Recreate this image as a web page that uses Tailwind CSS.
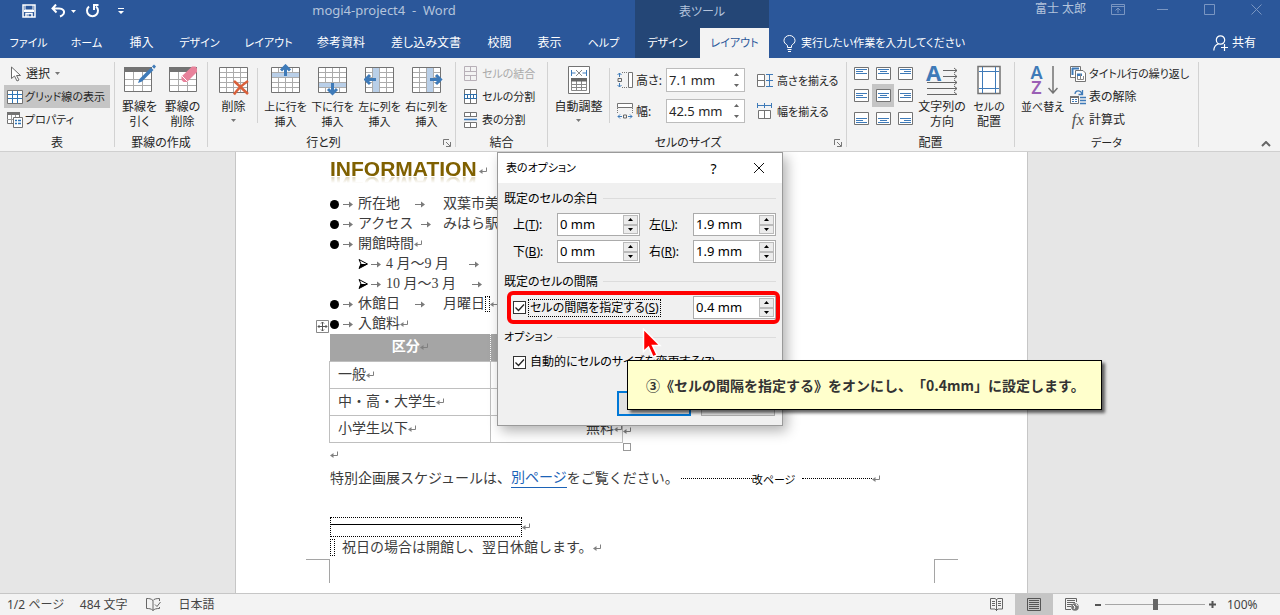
<!DOCTYPE html>
<html lang="ja">
<head>
<meta charset="utf-8">
<title>mogi4-project4 - Word</title>
<script src="https://cdn.jsdelivr.net/npm/@tailwindcss/browser@4"></script>
</head>
<body class="flex h-screen flex-col overflow-hidden whitespace-nowrap bg-[#e6e6e6] font-['Noto_Sans','Noto_Sans_CJK_JP',sans-serif] text-[12px] text-[#262626] [font-feature-settings:'palt']">

<svg width="0" height="0" class="absolute" aria-hidden="true">
  <symbol id="ret" viewBox="0 0 8 8"><path d="M7.500 0.500V4.500H2" fill="none" stroke="#808080"/><path d="M0 4.500L3.500 2V7Z" fill="#808080"/></symbol>
  <symbol id="tab" viewBox="0 0 10 7"><path d="M0 3.500H7" stroke="#7a7a7a" fill="none"/><path d="M6 0.500L10 3.500L6 6.500Z" fill="#7a7a7a"/></symbol>
  <symbol id="up" viewBox="0 0 5 3"><path d="M2.500 0L5 3H0Z" fill="currentColor"/></symbol>
  <symbol id="down" viewBox="0 0 5 3"><path d="M0 0H5L2.500 3Z" fill="currentColor"/></symbol>
  <symbol id="check" viewBox="0 0 13 13"><path d="M2.500 6.500L5.500 9.500L11 3.500" fill="none" stroke="#222" stroke-width="1.300"/></symbol>
  <symbol id="launch" viewBox="0 0 8 8"><path d="M0.500 6V0.500H6M3 3L7 7M7.500 3V7.500H3" fill="none" stroke="#777"/></symbol>
  <symbol id="grid" viewBox="0 0 30 28"><path d="M0.500 0.500H28.500V25.500H0.500Z" fill="#fff"/><path d="M7.500 0.500V25.500M14.500 0.500V25.500M21.500 0.500V25.500M0.500 5.500H28.500M0.500 10.500H28.500M0.500 15.500H28.500M0.500 20.500H28.500" stroke="#ababab" fill="none"/><path d="M0.500 0.500H28.500V25.500H0.500Z" fill="none" stroke="#737373"/></symbol>
  <symbol id="head" viewBox="0 0 30 28"><path d="M0.500 0.500H27.500V24.500H0.500Z" fill="#fff"/><path d="M9.500 5V24M18.500 5V24M0 12.500H28M0 18.500H28" stroke="#ababab" fill="none"/><path d="M0.500 0.500H27.500V24.500H0.500Z" fill="none" stroke="#737373"/><path d="M0 0H28V5H0Z" fill="#737373"/></symbol>
</svg>

<header class="shrink-0 bg-[#2b579a] text-white">
  <div class="flex h-7 items-stretch text-[#b4c4dc]">
    <div class="flex w-[635px] items-center">
      <div class="flex w-[134px] items-center pb-[6px] pl-[22px] text-white">
        <button aria-label="保存"><svg class="h-[14px] w-[14px]" viewBox="0 0 14 14" fill="none" stroke="currentColor"><path d="M1 1H13V13H1Z" stroke-width="1.500"/><path d="M3 1V6H11V1" /><path d="M2 7H12" stroke-width="2"/><path d="M4 13V9.500H10V13" stroke-width="1.500"/><path d="M6 10V13"/></svg></button>
        <button aria-label="元に戻す" class="ml-[15px] flex items-center gap-[6px]"><svg class="h-[14px] w-[14px]" viewBox="0 0 14 14" fill="none" stroke="currentColor" stroke-width="2"><path d="M5 0.500L1.500 4.500L5.500 8.500M2 4.500H8C12 4.500 14 7 12.500 10C11.500 11.500 10.500 12 9 12.500"/></svg><svg class="h-[3px] w-[5px]"><use href="#down"/></svg></button>
        <button aria-label="繰り返し" class="ml-[9px]"><svg class="h-[14px] w-[15px]" viewBox="0 0 15 14" fill="none" stroke="currentColor" stroke-width="2"><path d="M4 2.500A5.500 5.500 0 1 0 11 2.500"/><path d="M13.500 1H9V6"/></svg></button>
        <button aria-label="カスタマイズ" class="ml-[18px]"><svg class="h-[6px] w-[6px]" viewBox="0 0 6 6"><path d="M0 0H6V1H0ZM0 3H6L3 6Z" fill="currentColor"/></svg></button>
      </div>
      <div class="w-[500px] pb-[8px] text-center"><span class="whitespace-pre text-[13px] leading-5">mogi4-project4  -  Word</span></div>
    </div>
    <div class="flex w-[134px] items-center justify-center bg-[#244676] pb-1">表ツール</div>
    <div class="flex flex-1 items-center justify-end pb-[10px] pr-[18px]">
      <span class="mr-[25px] text-[12px]">富士 太郎</span>
      <div class="flex items-center gap-[32px] text-[#7a96c2]">
        <button aria-label="リボンの表示オプション"><svg class="h-[11px] w-[14px]" viewBox="0 0 14 11" fill="none" stroke="currentColor"><path d="M0.500 0.500H13.500V10.500H0.500ZM0.500 2.500H13.500M7 9V4.500M4.500 6.500L7 4L9.500 6.500"/></svg></button>
        <button aria-label="最小化"><svg class="h-[11px] w-[11px]" viewBox="0 0 11 11"><path d="M0 5.500H11" stroke="currentColor"/></svg></button>
        <button aria-label="最大化" class="ml-[4px]"><svg class="h-[11px] w-[11px]" viewBox="0 0 11 11"><path d="M0.500 0.500H10.500V10.500H0.500Z" fill="none" stroke="currentColor"/></svg></button>
        <button aria-label="閉じる" class="ml-[4px]"><svg class="h-[11px] w-[11px]" viewBox="0 0 11 11"><path d="M0.500 0.500L10.500 10.500M10.500 0.500L0.500 10.500" stroke="currentColor"/></svg></button>
      </div>
    </div>
  </div>
  <nav class="flex h-[30px] items-stretch">
    <button class="w-[57px] text-[11px]">ファイル</button>
    <button class="w-[59px] text-[11px]">ホーム</button>
    <button class="w-[51px]">挿入</button>
    <button class="w-[65px] text-[11px]">デザイン</button>
    <button class="w-[73px] text-[11px]">レイアウト</button>
    <button class="w-[72px]">参考資料</button>
    <button class="w-[98px]">差し込み文書</button>
    <button class="w-[49px]">校閲</button>
    <button class="w-[51px]">表示</button>
    <button class="mr-[3px] w-[57px] text-[11px]">ヘルプ</button>
    <button class="w-[65px] bg-[#244676] text-[11px]">デザイン</button>
    <button class="w-[69px] bg-[#f3f3f3] text-[11px] text-[#2b579a]">レイアウト</button>
    <button class="ml-[14px] flex items-center gap-[5px] text-[11px]"><svg class="h-[17px] w-[13px]" viewBox="0 0 13 17" fill="none" stroke="currentColor"><path d="M4.500 12.500V10.500C2 8.500 1 7.500 1 5.500A5.500 5 0 0 1 12 5.500C12 7.500 11 8.500 8.500 10.500V12.500ZM4.500 14.500H8.500M5 16.500H8"/></svg>実行したい作業を入力してください</button>
    <button class="ml-auto mr-6 flex items-center gap-1"><svg class="h-4 w-[15px]" viewBox="0 0 15 16" fill="none" stroke="currentColor" stroke-width="1.200"><circle cx="7.500" cy="5" r="4.200"/><path d="M0.800 15.500C1 12 3 9.500 5.500 9M8 12.500H15M11.500 9V16"/></svg>共有</button>
  </nav>
</header>

<section class="flex h-[94px] shrink-0 border-b border-[#cfcfcf] bg-[#f3f3f3] pt-1 leading-[15px]">
  <div class="h-[85px] w-[115px] border-r border-[#d2d2d2]">
    <div class="flex h-[72px] flex-col px-1">
      <button class="flex h-[23px] items-center pl-[6px]"><svg class="h-4 w-[16px]" viewBox="0 0 16 16"><path d="M1.500 1V12.500L4.500 10L7 15L9 14L6.500 9.500H10.500Z" fill="#fff" stroke="#6a6a6a"/></svg>選択<svg class="ml-[5px] h-[3px] w-[5px] text-[#777]"><use href="#down"/></svg></button>
      <button class="flex h-[23px] items-center gap-[2px] bg-[#c5c5c5] pl-[3px] text-[11px]"><svg class="h-[14px] w-4 shrink-0" viewBox="0 0 16 14" fill="none"><path d="M0.500 0.500H15.500V13.500H0.500Z" fill="#fff" stroke="#737373"/><path d="M1 4.500H15M1 8.500H15M5.500 1V13M10.500 1V13" stroke="#2e75b6"/></svg>グリッド線の表示</button>
      <button class="flex h-[23px] items-center gap-[2px] pl-[3px] text-[11px]"><svg class="h-4 w-4" viewBox="0 0 16 16" fill="none"><path d="M0.500 0.500H12.500V11.500H0.500Z" fill="#fff" stroke="#737373"/><path d="M0 0H13V3H0Z" fill="#737373"/><path d="M4.500 3V11M8.500 3V11M0 7.500H8" stroke="#999"/><path d="M6.500 5.500H15.500V15.500H6.500Z" fill="#fff" stroke="#737373"/><path d="M8 8.500H10M11 8.500H14M8 11.500H10M11 11.500H14" stroke="#2e75b6" stroke-width="1.500"/></svg>プロパティ</button>
    </div>
    <div class="pt-px text-center">表</div>
  </div>

  <div class="h-[85px] w-[93px] border-r border-[#d2d2d2]">
    <div class="flex h-[72px] items-start pl-[3px]">
      <button class="flex w-[43px] flex-col items-center pt-[2px]"><svg class="mb-[3px] h-8 w-8" viewBox="0 0 32 32"><use href="#head" y="3" width="30" height="28"/><path d="M14 19L15.500 15L27 3.500L29.500 6L18 17.500Z" fill="#3e7ab8"/><path d="M28 2.500L30 0.500L32 2.500L30.200 4.800Z" fill="#3e7ab8"/></svg>罫線を<br>引く</button>
      <button class="flex w-[43px] flex-col items-center pt-[2px]"><svg class="mb-[3px] h-8 w-8" viewBox="0 0 32 32"><use href="#head" x="2" y="3" width="30" height="28"/><path d="M14.500 12.500L25 2.500H28.500L30 4.500V8L20 18H16.500L14.500 16Z" fill="#e8829b"/><path d="M15 12L20.500 17.500" stroke="#fff"/></svg>罫線の<br>削除</button>
    </div>
    <div class="pt-px text-center">罫線の作成</div>
  </div>

  <div class="relative h-[85px] w-[248px] border-r border-[#d2d2d2]">
    <div class="flex h-[72px] items-start pl-[2px]">
      <button class="flex w-[47px] flex-col items-center pt-[2px]"><svg class="mb-[3px] h-8 w-8" viewBox="0 0 32 32"><use href="#grid" x="1" y="3" width="30" height="28"/><path d="M16 17L30 30M30 17C24 21 19 26 16 30.500" fill="none" stroke="#d9603b" stroke-width="2.500"/></svg>削除<svg class="mt-[5px] h-[3px] w-[5px] text-[#777]"><use href="#down"/></svg></button>
      <div class="mr-1 mt-[6px] h-[55px] w-px bg-[#d2d2d2]"></div>
      <button class="flex w-[47px] flex-col items-center pt-[2px] text-[11px]"><svg class="mb-[3px] h-8 w-8" viewBox="0 0 32 32"><use href="#grid" x="1" y="3" width="30" height="28"/><path d="M2 9H29V13H2Z" fill="#b9cfe8"/><path d="M15.500 12V3M11 6.500L15.500 2L20 6.500" stroke="#3e7ab8" stroke-width="3" fill="none"/></svg>上に行を<br>挿入</button>
      <button class="flex w-[47px] flex-col items-center pt-[2px] text-[11px]"><svg class="mb-[3px] h-8 w-8" viewBox="0 0 32 32"><use href="#grid" x="1" y="3" width="30" height="28"/><path d="M2 19H29V23H2Z" fill="#b9cfe8"/><path d="M15.500 19V29M11 25L15.500 29.500L20 25" stroke="#3e7ab8" stroke-width="3" fill="none"/></svg>下に行を<br>挿入</button>
      <button class="flex w-[47px] flex-col items-center pt-[2px] text-[11px]"><svg class="mb-[3px] h-8 w-8" viewBox="0 0 32 32"><use href="#grid" x="1" y="3" width="30" height="28"/><path d="M9 4H15V28H9Z" fill="#b9cfe8"/><path d="M12 15.500H2M6 11L1.500 15.500L6 20" stroke="#3e7ab8" stroke-width="3" fill="none"/></svg>左に列を<br>挿入</button>
      <button class="flex w-[47px] flex-col items-center pt-[2px] text-[11px]"><svg class="mb-[3px] h-8 w-8" viewBox="0 0 32 32"><use href="#grid" x="1" y="3" width="30" height="28"/><path d="M16 4H22V28H16Z" fill="#b9cfe8"/><path d="M19 15.500H29M25 11L29.500 15.500L25 20" stroke="#3e7ab8" stroke-width="3" fill="none"/></svg>右に列を<br>挿入</button>
    </div>
    <div class="pr-4 pt-px text-center">行と列</div>
    <button aria-label="行と列の詳細" class="absolute bottom-0 right-1"><svg class="h-2 w-2"><use href="#launch"/></svg></button>
  </div>

  <div class="h-[85px] w-[92px] border-r border-[#d2d2d2]">
    <div class="flex h-[72px] flex-col pl-2 text-[11px]">
      <button class="flex h-[23px] items-center gap-1 text-[#aaa]" disabled><svg class="h-4 w-[14px]" viewBox="0 0 14 16" fill="none" stroke="#b8b0b8"><path d="M0.500 0.500H12.500V14.500H0.500ZM0.500 5.500H12.500M0.500 9.500H12.500M6.500 0.500V5.500M6.500 9.500V14.500"/></svg>セルの結合</button>
      <button class="flex h-[23px] items-center gap-1"><svg class="h-4 w-[14px]" viewBox="0 0 14 16" fill="none" stroke="#737373"><path d="M0.500 0.500H12.500V14.500H0.500ZM6.500 0.500V5.500M6.500 9.500V14.500" fill="#fff"/><path d="M0 5.500H13M0 9.500H13M3.500 5V10M6.500 5V10M9.500 5V10M0.500 5V10M12.500 5V10" stroke="#2e6da8"/></svg>セルの分割</button>
      <button class="flex h-[23px] items-center gap-1"><svg class="h-4 w-[14px]" viewBox="0 0 14 16" fill="none" stroke="#737373"><path d="M0.500 5V0.500H12.500V5M6.500 0V5M0.500 4.500H12.500M0.500 10.500H12.500V15.500H0.500ZM6.500 10V15" fill="#fff"/><path d="M0 7.500H13" stroke="#3e7ab8" stroke-width="1.500"/></svg>表の分割</button>
    </div>
    <div class="pt-px text-center">結合</div>
  </div>

  <div class="relative h-[85px] w-[299px] border-r border-[#d2d2d2]">
    <div class="flex h-[72px] items-start">
      <button class="flex w-[61px] flex-col items-center pt-[2px]"><svg class="mb-[3px] h-8 w-6" viewBox="0 0 24 32" fill="none"><path d="M1.500 2.500H22.500V29.500H1.500Z" fill="#fff" stroke="#737373"/><path d="M4.500 6V12M19.500 6V12M5 9H8.500M15.500 9H19" stroke="#3e7ab8"/><path d="M9 6L15 12M15 6L9 12" stroke="#888"/><path d="M4.500 15.500H19.500V26.500H4.500ZM9.500 16V26M14.500 16V26M4 20.500H20M4 23.500H20" stroke="#888"/><path d="M4 14H20V17.500H4Z" fill="#666"/></svg>自動調整<svg class="mt-[5px] h-[3px] w-[5px] text-[#777]"><use href="#down"/></svg></button>
      <div class="mt-[6px] h-[55px] w-px bg-[#d2d2d2]"></div>
      <div class="flex flex-col gap-[7px] pl-[7px] pt-[6px]">
        <div class="flex h-6 items-center">
          <svg class="mr-[3px] h-4 w-4" viewBox="0 0 16 16" fill="none"><path d="M2.500 1V5M0.500 3L2.500 1L4.500 3M2.500 11V15M0.500 13L2.500 15L4.500 13" stroke="#3e7ab8"/><path d="M1 6.500H4.500V9.500H1Z" stroke="#666"/><path d="M5 0.500H11M5 15.500H11" stroke="#777" stroke-dasharray="1 1"/><path d="M11.500 0.500H15.500V15.500H11.500Z" fill="#fff" stroke="#737373"/></svg>
          <label for="rh" class="w-[30px]">高さ:</label>
          <div class="flex h-6 w-[79px] items-center border border-[#bcbcbc] bg-white text-[13px]"><input id="rh" value="7.1 mm" class="min-w-0 flex-1 pl-[2px] outline-none"><span class="flex flex-col gap-[8px] px-[5px] text-[#666]"><button aria-label="増" class="h-[3px]"><svg class="block h-[3px] w-[5px]"><use href="#up"/></svg></button><button aria-label="減" class="h-[3px]"><svg class="block h-[3px] w-[5px]"><use href="#down"/></svg></button></span></div>
          <button class="ml-3 flex items-center gap-1 text-[11px]"><svg class="h-[15px] w-4" viewBox="0 0 16 15" fill="none"><path d="M0.500 1.500H7.500V13.500H0.500ZM0.500 7.500H7.500" fill="#fff" stroke="#737373"/><path d="M9 1.500H16M9 7.500H16M9 13.500H16M12.500 2V13" stroke="#3e7ab8"/></svg>高さを揃える</button>
        </div>
        <div class="flex h-6 items-center">
          <svg class="mr-[3px] h-4 w-4" viewBox="0 0 16 16" fill="none"><path d="M0.500 0.500H15.500V4.500H0.500Z" fill="#fff" stroke="#737373"/><path d="M0.500 5V11M15.500 5V11" stroke="#777" stroke-dasharray="1 1"/><path d="M1 13.500H5M3 11.500L1 13.500L3 15.500M11 13.500H15M13 11.500L15 13.500L13 15.500" stroke="#3e7ab8"/><path d="M6.500 12H9.500V15H6.500Z" stroke="#666"/></svg>
          <label for="rw" class="w-[30px]">幅:</label>
          <div class="flex h-6 w-[79px] items-center border border-[#bcbcbc] bg-white text-[13px]"><input id="rw" value="42.5 mm" class="min-w-0 flex-1 pl-[2px] outline-none"><span class="flex flex-col gap-[8px] px-[5px] text-[#666]"><button aria-label="増" class="h-[3px]"><svg class="block h-[3px] w-[5px]"><use href="#up"/></svg></button><button aria-label="減" class="h-[3px]"><svg class="block h-[3px] w-[5px]"><use href="#down"/></svg></button></span></div>
          <button class="ml-3 flex items-center gap-1 text-[11px]"><svg class="h-4 w-4" viewBox="0 0 16 16" fill="none"><path d="M0.500 0V5M7.500 0V5M14.500 0V5M0 2.500H15" stroke="#3e7ab8"/><path d="M1.500 7.500H13.500V15.500H1.500ZM7.500 7.500V15.500" fill="#fff" stroke="#737373"/></svg>幅を揃える</button>
        </div>
      </div>
    </div>
    <div class="pr-[18px] pt-px text-center">セルのサイズ</div>
    <button aria-label="セルのサイズの詳細" class="absolute bottom-0 right-1"><svg class="h-2 w-2"><use href="#launch"/></svg></button>
  </div>

  <div class="h-[85px] w-[168px] border-r border-[#d2d2d2]">
    <div class="flex h-[72px] items-start pl-[3px]">
      <div class="grid w-[66px] shrink-0 grid-cols-3">
        <button aria-label="上揃え(左)" class="flex h-[22px] items-center justify-center"><svg class="h-[13px] w-[15px]" viewBox="0 0 15 13"><path d="M0.500 0.500H14.500V12.500H0.500Z" fill="#fff" stroke="#737373"/><path d="M2 2.500H13M2 4.500H9M2 6.500H13" stroke="#3e7ab8"/></svg></button>
        <button aria-label="上揃え(中央)" class="flex h-[22px] items-center justify-center"><svg class="h-[13px] w-[15px]" viewBox="0 0 15 13"><path d="M0.500 0.500H14.500V12.500H0.500Z" fill="#fff" stroke="#737373"/><path d="M2 2.500H13M4 4.500H11M2 6.500H13" stroke="#3e7ab8"/></svg></button>
        <button aria-label="上揃え(右)" class="flex h-[22px] items-center justify-center"><svg class="h-[13px] w-[15px]" viewBox="0 0 15 13"><path d="M0.500 0.500H14.500V12.500H0.500Z" fill="#fff" stroke="#737373"/><path d="M2 2.500H13M6 4.500H13M2 6.500H13" stroke="#3e7ab8"/></svg></button>
        <button aria-label="中央揃え(左)" class="flex h-[23px] items-center justify-center"><svg class="h-[13px] w-[15px]" viewBox="0 0 15 13"><path d="M0.500 0.500H14.500V12.500H0.500Z" fill="#fff" stroke="#737373"/><path d="M2 4.500H13M2 6.500H9M2 8.500H13" stroke="#3e7ab8"/></svg></button>
        <button aria-label="中央揃え" class="flex h-[23px] items-center justify-center bg-[#c5c5c5]"><svg class="h-[13px] w-[15px]" viewBox="0 0 15 13"><path d="M0.500 0.500H14.500V12.500H0.500Z" fill="#fff" stroke="#737373"/><path d="M2 4.500H13M4 6.500H11M2 8.500H13" stroke="#3e7ab8"/></svg></button>
        <button aria-label="中央揃え(右)" class="flex h-[23px] items-center justify-center"><svg class="h-[13px] w-[15px]" viewBox="0 0 15 13"><path d="M0.500 0.500H14.500V12.500H0.500Z" fill="#fff" stroke="#737373"/><path d="M2 4.500H13M6 6.500H13M2 8.500H13" stroke="#3e7ab8"/></svg></button>
        <button aria-label="下揃え(左)" class="flex h-[23px] items-center justify-center"><svg class="h-[13px] w-[15px]" viewBox="0 0 15 13"><path d="M0.500 0.500H14.500V12.500H0.500Z" fill="#fff" stroke="#737373"/><path d="M2 6.500H13M2 8.500H9M2 10.500H13" stroke="#3e7ab8"/></svg></button>
        <button aria-label="下揃え(中央)" class="flex h-[23px] items-center justify-center"><svg class="h-[13px] w-[15px]" viewBox="0 0 15 13"><path d="M0.500 0.500H14.500V12.500H0.500Z" fill="#fff" stroke="#737373"/><path d="M2 6.500H13M4 8.500H11M2 10.500H13" stroke="#3e7ab8"/></svg></button>
        <button aria-label="下揃え(右)" class="flex h-[23px] items-center justify-center"><svg class="h-[13px] w-[15px]" viewBox="0 0 15 13"><path d="M0.500 0.500H14.500V12.500H0.500Z" fill="#fff" stroke="#737373"/><path d="M2 6.500H13M6 8.500H13M2 10.500H13" stroke="#3e7ab8"/></svg></button>
      </div>
      <button class="ml-px flex w-[50px] shrink-0 flex-col items-center pt-[2px]"><span class="relative mb-[3px] block h-8 w-8"><svg class="h-8 w-8" viewBox="0 0 32 32" fill="none" stroke="#666"><path d="M17 6.500H31M28 4L31 6.500L28 9M17 12.500H31M28 10L31 12.500L28 15M1 18.500H31M28 16L31 18.500L28 21M1 24.500H31M28 22L31 24.500L28 27M1 30.500H31M28 28L31 30.500"/></svg><b class="absolute left-0 top-0 text-[22px] leading-[17px] text-[#3e7ab8]">A</b></span>文字列の<br>方向</button>
      <button class="flex w-[44px] flex-col items-center pt-[2px]"><svg class="mb-[3px] h-8 w-6" viewBox="0 0 24 32" fill="none"><path d="M1 2.500H23V29.500H1Z" fill="#fff" stroke="#737373" stroke-width="1.500"/><path d="M5.500 3V29M18.500 3V29M2 7.500H22M2 24.500H22" stroke="#3e7ab8"/></svg><span class="text-[11px]">セルの</span>配置</button>
    </div>
    <div class="pt-px text-center">配置</div>
  </div>

  <div class="h-[85px] w-[184px] border-r border-[#d2d2d2]">
    <div class="flex h-[72px] items-start">
      <button class="flex w-[55px] flex-col items-center pt-[2px]"><span class="mb-[3px] flex h-8 w-6 items-center"><span class="flex flex-col text-[18px] leading-[15px]"><b class="font-semibold text-[#3e7ab8]">A</b><b class="font-semibold text-[#9a5fb5]">Z</b></span><svg class="ml-[5px] h-7 w-[10px] shrink-0" viewBox="0 0 10 28" fill="none" stroke="#737373" stroke-width="1.500"><path d="M5 0V27M0.500 22L5 27L9.500 22"/></svg></span><span class="text-[11px]">並べ替え</span></button>
      <div class="flex flex-col items-start text-[11px]">
        <button class="flex h-[23px] items-center gap-[3px]"><svg class="h-4 w-4" viewBox="0 0 16 16" fill="none"><path d="M0.500 0.500H10.500V11.500H0.500Z" fill="#fff" stroke="#737373"/><path d="M2 2.500H9M2.500 2V9" stroke="#3e7ab8" stroke-width="2"/><path d="M5.500 4.500H13L15.500 7V15.500H5.500Z" fill="#fff" stroke="#737373"/><path d="M7 7.500H12V10H7Z" fill="#3e7ab8"/><path d="M7.500 10V13.500H13.500V10M10.500 8V13" stroke="#888"/></svg>タイトル行の繰り返し</button>
        <button class="flex h-[23px] items-center gap-[3px] text-[12px]"><svg class="h-4 w-4" viewBox="0 0 16 16" fill="none"><path d="M0.500 7.500H8.500V14.500H0.500Z" fill="#fff" stroke="#737373"/><path d="M0 8H9" stroke="#737373" stroke-width="2"/><path d="M2 10.500H7M2 12.500H7" stroke="#3e7ab8" stroke-dasharray="2 1"/><path d="M5 5C5 2 8 1 10.500 2.500L12 5M12.500 1V5.500H8.500M10 8.500H16M10 11.500H16M10 14.500H16" stroke="#3e7ab8" stroke-width="1.300"/></svg>表の解除</button>
        <button class="flex h-[23px] items-center gap-[3px] text-[12px]"><i class="w-4 font-['Liberation_Serif',serif] text-[17px] text-[#555]">fx</i>計算式</button>
      </div>
    </div>
    <div class="pt-px text-center text-[11px]">データ</div>
  </div>
  <div class="flex flex-1 items-end justify-end pb-[4px] pr-[9px]"><button aria-label="リボンを折りたたむ"><svg class="h-[6px] w-[10px]" viewBox="0 0 10 6"><path d="M1 5L5 1L9 5" fill="none" stroke="#666" stroke-width="2"/></svg></button></div>
</section>

<main class="relative flex min-h-0 flex-1 justify-center overflow-hidden pr-[17px]">
  <article class="w-[793px] shrink-0 border-x border-[#c6c6c6] bg-white pl-[70px] pr-[69px] font-['Liberation_Serif','Noto_Sans_CJK_JP',serif] text-[14px] leading-5 text-[#3c3c3c] [font-feature-settings:normal]">
    <div class="pl-6">
      <h1 class="flex h-[42px] items-center pb-[8px] font-['Liberation_Sans',sans-serif] text-[21px] font-bold text-[#7f6000]"><span class="leading-5 [-webkit-box-reflect:below_-5px_linear-gradient(transparent_55%,rgba(0,0,0,0.4))]">INFORMATION</span><svg class="ml-[2px] mt-1 h-2 w-2"><use href="#ret"/></svg></h1>
      <ul>
        <li class="flex h-5 items-center"><span class="h-[9px] w-[9px] rounded-full bg-black"></span><svg class="ml-1 mr-[5px] h-[7px] w-[10px]"><use href="#tab"/></svg><span class="flex w-[85px] items-center">所在地<svg class="ml-[15px] h-[7px] w-[10px]"><use href="#tab"/></svg></span>双葉市美</li>
        <li class="flex h-5 items-center"><span class="h-[9px] w-[9px] rounded-full bg-black"></span><svg class="ml-1 mr-[5px] h-[7px] w-[10px]"><use href="#tab"/></svg><span class="flex w-[85px] items-center">アクセス<svg class="ml-[8px] h-[7px] w-[10px]"><use href="#tab"/></svg></span>みはら駅</li>
        <li class="flex h-5 items-center"><span class="h-[9px] w-[9px] rounded-full bg-black"></span><svg class="ml-1 mr-[5px] h-[7px] w-[10px]"><use href="#tab"/></svg>開館時間<svg class="h-2 w-2"><use href="#ret"/></svg></li>
        <li class="flex h-5 items-center pl-7"><svg class="h-[10px] w-[10px]" viewBox="0 0 10 10"><path d="M1 0.500L9.500 5L1 9.500L3 5Z" fill="#fff" stroke="#000"/><path d="M2.500 5H9.500L1 9.500Z" fill="#000"/></svg><svg class="ml-[3px] mr-[5px] h-[7px] w-[10px]"><use href="#tab"/></svg>4 月～9 月<svg class="ml-[20px] h-[7px] w-[10px]"><use href="#tab"/></svg></li>
        <li class="flex h-5 items-center pl-7"><svg class="h-[10px] w-[10px]" viewBox="0 0 10 10"><path d="M1 0.500L9.500 5L1 9.500L3 5Z" fill="#fff" stroke="#000"/><path d="M2.500 5H9.500L1 9.500Z" fill="#000"/></svg><svg class="ml-[3px] mr-[5px] h-[7px] w-[10px]"><use href="#tab"/></svg>10 月～3 月<svg class="ml-[16px] h-[7px] w-[10px]"><use href="#tab"/></svg></li>
        <li class="flex h-5 items-center"><span class="h-[9px] w-[9px] rounded-full bg-black"></span><svg class="ml-1 mr-[5px] h-[7px] w-[10px]"><use href="#tab"/></svg><span class="flex w-[85px] items-center">休館日<svg class="ml-[15px] h-[7px] w-[10px]"><use href="#tab"/></svg></span>月曜日<span class="h-4 w-[5px] border border-dotted border-black"></span><svg class="h-2 w-2"><use href="#ret"/></svg></li>
        <li class="relative flex h-5 items-center"><svg class="absolute -left-[14px] top-[6px] h-[13px] w-[13px]" viewBox="0 0 13 13" fill="none" stroke="#555"><path d="M0.500 0.500H12.500V12.500H0.500Z" stroke="#888"/><path d="M6.500 2V11M2 6.500H11M5 3.500L6.500 2L8 3.500M5 9.500L6.500 11L8 9.500M3.500 5L2 6.500L3.500 8M9.500 5L11 6.500L9.500 8"/></svg><span class="h-[9px] w-[9px] rounded-full bg-black"></span><svg class="ml-1 mr-[5px] h-[7px] w-[10px]"><use href="#tab"/></svg>入館料<svg class="h-2 w-2"><use href="#ret"/></svg></li>
      </ul>
      <div class="relative -ml-px w-[294px]">
        <table class="w-full table-fixed border-collapse">
          <tr class="h-[27px] bg-[#a5a5a5] text-white"><th class="w-[161px] border-r border-dotted border-white p-0"><span class="inline-flex items-center">区分<svg class="h-2 w-2"><use href="#ret"/></svg></span></th><th class="p-0"></th></tr>
          <tr class="h-[27px]"><td class="border border-[#bfbfbf] py-0 pl-2"><span class="flex items-center">一般<svg class="h-2 w-2"><use href="#ret"/></svg></span></td><td class="border border-[#bfbfbf]"></td></tr>
          <tr class="h-[27px]"><td class="border border-[#bfbfbf] py-0 pl-2"><span class="flex items-center">中・高・大学生<svg class="h-2 w-2"><use href="#ret"/></svg></span></td><td class="border border-[#bfbfbf]"></td></tr>
          <tr class="h-[27px]"><td class="border border-[#bfbfbf] py-0 pl-2"><span class="flex items-center">小学生以下<svg class="h-2 w-2"><use href="#ret"/></svg></span></td><td class="border border-[#bfbfbf] p-0"><span class="flex items-center justify-end">無料<svg class="h-2 w-2"><use href="#ret"/></svg></span></td></tr>
        </table>
        <svg class="absolute -right-2 bottom-2 h-2 w-2"><use href="#ret"/></svg>
        <span class="absolute -bottom-2 -right-2 h-2 w-2 border border-[#999]"></span>
      </div>
      <div class="flex h-6 items-center"><svg class="h-2 w-2"><use href="#ret"/></svg></div>
      <p class="flex h-6 items-center">特別企画展スケジュールは、<a href="#" class="border-b border-[#1c63b7] leading-[18px] text-[#1c63b7]">別ページ</a>をご覧ください。<span class="ml-[2px] w-[71px] border-b border-dotted border-black"></span><span class="font-['Noto_Sans_CJK_JP',sans-serif] text-[11px] text-black [font-feature-settings:'palt']">改ページ</span><span class="ml-[7px] w-[70px] border-b border-dotted border-black"></span><svg class="h-2 w-2"><use href="#ret"/></svg></p>
      <div class="mt-[26px] flex h-5 items-center"><span class="h-5 w-[192px] border border-dotted border-black pt-[6px]"><span class="block h-px bg-black"></span></span><svg class="h-2 w-2"><use href="#ret"/></svg></div>
      <p class="flex h-[22px] items-center"><span class="mr-[7px] h-[17px] w-[5px] border border-dotted border-black"></span>祝日の場合は開館し、翌日休館します。<svg class="h-2 w-2"><use href="#ret"/></svg></p>
    </div>
    <div class="flex justify-between"><span class="h-6 w-6 border-r border-t border-[#a5a5a5]"></span><span class="h-6 w-6 border-l border-t border-[#a5a5a5]"></span></div>
  </article>

  <div role="dialog" aria-label="表のオプション" class="absolute left-[497px] top-0 w-[286px] border border-[#9a9a9a] bg-[#f0f0f0] pb-[9px] text-black shadow-[4px_5px_12px_rgba(0,0,0,0.3)]">
    <div class="flex h-[30px] items-center bg-white pl-2"><span class="text-[11px]">表のオプション</span><button aria-label="ヘルプ" class="ml-auto w-[45px] text-[14px]">?</button><button aria-label="閉じる" class="flex w-[46px] justify-center"><svg class="h-[10px] w-[10px]" viewBox="0 0 10 10"><path d="M0 0L10 10M10 0L0 10" stroke="#111"/></svg></button></div>
    <div class="px-[6px]">
      <div class="flex h-[30px] items-center gap-[5px] pt-px text-[12px]">既定のセルの余白<span class="h-px flex-1 bg-[#dcdcdc]"></span></div>
      <div class="grid grid-cols-[53px_83px_9px_44px_83px] gap-y-[4px] text-[13px]">
        <label for="t" class="self-center pl-[9px] pt-px text-[12px]">上(<u>T</u>):</label>
        <div class="flex h-[23px] border border-[#ababab] bg-white p-px"><input id="t" value="0 mm" class="min-w-0 flex-1 pl-px outline-none"><span class="flex w-[15px] flex-col"><button aria-label="増" class="flex flex-1 items-center justify-center border border-[#bbb] bg-[#ececec]"><svg class="h-[3px] w-[5px]"><use href="#up"/></svg></button><button aria-label="減" class="flex flex-1 items-center justify-center border border-[#bbb] bg-[#ececec]"><svg class="h-[3px] w-[5px]"><use href="#down"/></svg></button></span></div>
        <span></span>
        <label for="l" class="self-center pt-px text-[12px]">左(<u>L</u>):</label>
        <div class="flex h-[23px] border border-[#ababab] bg-white p-px"><input id="l" value="1.9 mm" class="min-w-0 flex-1 pl-px outline-none"><span class="flex w-[15px] flex-col"><button aria-label="増" class="flex flex-1 items-center justify-center border border-[#bbb] bg-[#ececec]"><svg class="h-[3px] w-[5px]"><use href="#up"/></svg></button><button aria-label="減" class="flex flex-1 items-center justify-center border border-[#bbb] bg-[#ececec]"><svg class="h-[3px] w-[5px]"><use href="#down"/></svg></button></span></div>
        <label for="b" class="self-center pl-[9px] pt-px text-[12px]">下(<u>B</u>):</label>
        <div class="flex h-[23px] border border-[#ababab] bg-white p-px"><input id="b" value="0 mm" class="min-w-0 flex-1 pl-px outline-none"><span class="flex w-[15px] flex-col"><button aria-label="増" class="flex flex-1 items-center justify-center border border-[#bbb] bg-[#ececec]"><svg class="h-[3px] w-[5px]"><use href="#up"/></svg></button><button aria-label="減" class="flex flex-1 items-center justify-center border border-[#bbb] bg-[#ececec]"><svg class="h-[3px] w-[5px]"><use href="#down"/></svg></button></span></div>
        <span></span>
        <label for="r" class="self-center pt-px text-[12px]">右(<u>R</u>):</label>
        <div class="flex h-[23px] border border-[#ababab] bg-white p-px"><input id="r" value="1.9 mm" class="min-w-0 flex-1 pl-px outline-none"><span class="flex w-[15px] flex-col"><button aria-label="増" class="flex flex-1 items-center justify-center border border-[#bbb] bg-[#ececec]"><svg class="h-[3px] w-[5px]"><use href="#up"/></svg></button><button aria-label="減" class="flex flex-1 items-center justify-center border border-[#bbb] bg-[#ececec]"><svg class="h-[3px] w-[5px]"><use href="#down"/></svg></button></span></div>
      </div>
      <div class="mt-[3px] flex h-[30px] items-center gap-[5px] pt-px">既定のセルの間隔<span class="h-px flex-1 bg-[#dcdcdc]"></span></div>
      <div class="relative flex h-[23px] items-center pl-[9px]">
        <span class="relative h-[13px] w-[13px]"><input type="checkbox" id="s" checked class="peer block h-[13px] w-[13px] appearance-none border border-[#333] bg-white"><svg class="pointer-events-none absolute inset-0 hidden h-[13px] w-[13px] peer-checked:block"><use href="#check"/></svg></span>
        <label for="s" class="ml-[2px] border border-dotted border-black px-px leading-4">セルの間隔を指定する(<u>S</u>)</label>
        <div class="ml-auto flex h-[23px] w-[83px] border border-[#ababab] bg-white p-px text-[13px]"><input aria-label="間隔" value="0.4 mm" class="min-w-0 flex-1 pl-px outline-none"><span class="flex w-[15px] flex-col"><button aria-label="増" class="flex flex-1 items-center justify-center border border-[#bbb] bg-[#ececec]"><svg class="h-[3px] w-[5px]"><use href="#up"/></svg></button><button aria-label="減" class="flex flex-1 items-center justify-center border border-[#bbb] bg-[#ececec]"><svg class="h-[3px] w-[5px]"><use href="#down"/></svg></button></span></div>
        <span class="pointer-events-none absolute -inset-y-[5px] -right-1 left-[3px] rounded-md border-4 border-[#f00]"></span>
      </div>
      <div class="mt-[3px] flex h-[30px] items-center gap-[5px] pt-px"><span class="text-[11px]">オプション</span><span class="h-px flex-1 bg-[#dcdcdc]"></span></div>
      <div class="flex h-5 items-center pl-[9px]">
        <span class="relative h-[13px] w-[13px]"><input type="checkbox" id="z" checked class="peer block h-[13px] w-[13px] appearance-none border border-[#333] bg-white"><svg class="pointer-events-none absolute inset-0 hidden h-[13px] w-[13px] peer-checked:block"><use href="#check"/></svg></span>
        <label for="z" class="ml-[4px]">自動的にセルのサイズを変更する(<u>Z</u>)</label>
      </div>
      <div class="mt-[19px] flex justify-end gap-[10px] pr-px">
        <button aria-label="OK" class="h-[25px] w-[74px] border-2 border-[#0078d7] bg-[#e1e1e1]"></button>
        <button aria-label="キャンセル" class="h-[25px] w-[74px] border border-[#adadad] bg-[#e1e1e1]"></button>
      </div>
    </div>
  </div>

  <svg class="absolute left-[642px] top-[176px] h-[32px] w-[20px]" viewBox="0 0 20 32"><path d="M1.500 1V23.500L6.500 19L11 29L15 27L10.500 17.500H18Z" fill="#f00" stroke="#fff" stroke-width="1.500"/></svg>
  <div class="absolute left-[627px] top-[208px] flex h-[50px] w-[475px] items-center border border-black bg-[#ffffcc] pl-[18px] font-['Noto_Sans_CJK_JP',sans-serif] text-[14px] font-bold text-[#333] shadow-[3px_3px_3px_rgba(0,0,0,0.6)] [font-feature-settings:normal] [text-spacing-trim:space-all]">③《セルの間隔を指定する》をオンにし、「0.4mm」に設定します。</div>
</main>

<footer class="flex h-[22px] shrink-0 items-stretch border-t border-[#c6c6c6] bg-[#f3f3f3] text-[#444]">
  <div class="flex items-center gap-4 pl-[7px]"><span>1/2 ページ</span><span>484 文字</span><svg class="mx-[2px] h-[13px] w-[15px]" viewBox="0 0 15 13" fill="none" stroke="#666"><path d="M7 2.500C5 0.500 3 0.500 0.500 0.500V10.500C3 10.500 5 10.500 7 12.500V2.500C8 1 10 0.500 13.500 0.500V3M7 12.500C8.500 11 10 10.500 13.500 10.500V9M9 6.500L11 8.500L14.500 4"/></svg><span>日本語</span></div>
  <div class="ml-auto flex items-stretch">
    <button aria-label="閲覧モード" class="flex w-[38px] items-center justify-center"><svg class="h-[13px] w-[13px]" viewBox="0 0 13 13" fill="none" stroke="#666"><path d="M0.500 0.500H5L6.500 1.500L8 0.500H12.500V11H8L6.500 12.500L5 11H0.500ZM6.500 1V13M2 3.500H5M2 5.500H5M2 7.500H5M8 3.500H11M8 5.500H11M8 7.500H11"/></svg></button>
    <button aria-label="印刷レイアウト" class="flex w-[38px] items-center justify-center bg-[#c5c5c5]"><svg class="h-[13px] w-[14px]" viewBox="0 0 14 13" fill="none" stroke="#555"><path d="M0.500 0.500H13.500V12.500H0.500ZM2 2.500H12M2 4.500H12M2 6.500H12M2 8.500H12M2 10.500H12"/></svg></button>
    <button aria-label="Webレイアウト" class="flex w-[38px] items-center justify-center"><svg class="h-[13px] w-[14px]" viewBox="0 0 14 13" fill="none" stroke="#666"><path d="M11.500 4V0.500H0.500V11.500H6M2 2.500H10M2 4.500H10M2 6.500H7M2 8.500H6"/><circle cx="10" cy="9" r="3.800" fill="#777" stroke="none"/><path d="M8 7L10 9L9 11M11 6L12.500 8" stroke="#fff"/></svg></button>
    <div class="flex items-center gap-1 pl-[4px]">
      <button aria-label="縮小"><svg class="h-[6px] w-[6px]" viewBox="0 0 6 6"><path d="M0 3H6" stroke="#555" stroke-width="2"/></svg></button>
      <input type="range" aria-label="ズーム" min="0" max="100" value="50" class="h-3 w-[100px] appearance-none bg-[linear-gradient(#a6a6a6,#a6a6a6)] bg-[length:100%_1px] bg-center bg-no-repeat [&::-webkit-slider-thumb]:h-[11px] [&::-webkit-slider-thumb]:w-[5px] [&::-webkit-slider-thumb]:appearance-none [&::-webkit-slider-thumb]:bg-[#666]">
      <button aria-label="拡大"><svg class="h-[7px] w-[7px]" viewBox="0 0 7 7"><path d="M0 3.500H7M3.500 0V7" stroke="#555" stroke-width="2"/></svg></button>
      <span class="ml-[7px] w-[53px]">100%</span>
    </div>
  </div>
</footer>
</body>
</html>
